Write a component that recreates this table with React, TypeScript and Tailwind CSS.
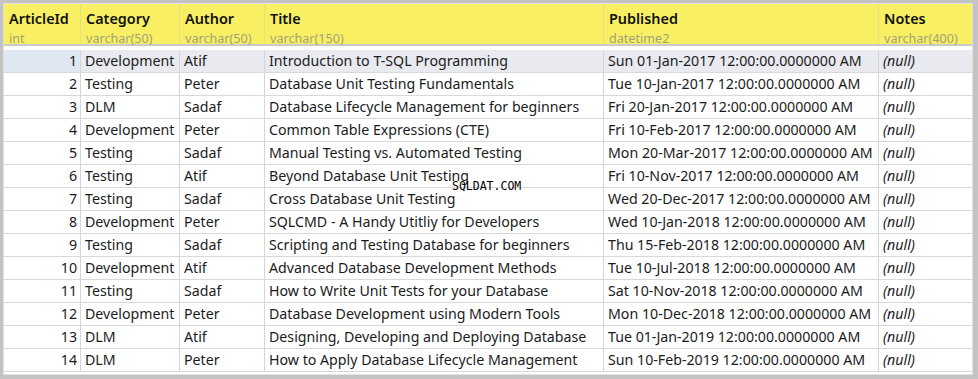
const columns = [
  { name: 'ArticleId', type: 'int', width: 'w-[77px]' },
  { name: 'Category', type: 'varchar(50)', width: 'w-[99px]' },
  { name: 'Author', type: 'varchar(50)', width: 'w-[85px]' },
  { name: 'Title', type: 'varchar(150)', width: 'w-[339px]' },
  { name: 'Published', type: 'datetime2', width: 'w-[275px]' },
  { name: 'Notes', type: 'varchar(400)', width: 'w-[93px]' },
];

const rows = [
  [1, 'Development', 'Atif', 'Introduction to T-SQL Programming', 'Sun 01-Jan-2017 12:00:00.0000000 AM'],
  [2, 'Testing', 'Peter', 'Database Unit Testing Fundamentals', 'Tue 10-Jan-2017 12:00:00.0000000 AM'],
  [3, 'DLM', 'Sadaf', 'Database Lifecycle Management for beginners', 'Fri 20-Jan-2017 12:00:00.0000000 AM'],
  [4, 'Development', 'Peter', 'Common Table Expressions (CTE)', 'Fri 10-Feb-2017 12:00:00.0000000 AM'],
  [5, 'Testing', 'Sadaf', 'Manual Testing vs. Automated Testing', 'Mon 20-Mar-2017 12:00:00.0000000 AM'],
  [6, 'Testing', 'Atif', 'Beyond Database Unit Testing', 'Fri 10-Nov-2017 12:00:00.0000000 AM'],
  [7, 'Testing', 'Sadaf', 'Cross Database Unit Testing', 'Wed 20-Dec-2017 12:00:00.0000000 AM'],
  [8, 'Development', 'Peter', 'SQLCMD - A Handy Utitliy for Developers', 'Wed 10-Jan-2018 12:00:00.0000000 AM'],
  [9, 'Testing', 'Sadaf', 'Scripting and Testing Database for beginners', 'Thu 15-Feb-2018 12:00:00.0000000 AM'],
  [10, 'Development', 'Atif', 'Advanced Database Development Methods', 'Tue 10-Jul-2018 12:00:00.0000000 AM'],
  [11, 'Testing', 'Sadaf', 'How to Write Unit Tests for your Database', 'Sat 10-Nov-2018 12:00:00.0000000 AM'],
  [12, 'Development', 'Peter', 'Database Development using Modern Tools', 'Mon 10-Dec-2018 12:00:00.0000000 AM'],
  [13, 'DLM', 'Atif', 'Designing, Developing and Deploying Database', 'Tue 01-Jan-2019 12:00:00.0000000 AM'],
  [14, 'DLM', 'Peter', 'How to Apply Database Lifecycle Management', 'Sun 10-Feb-2019 12:00:00.0000000 AM'],
];

export default function App() {
  return (
    <div className="w-[978px] h-[379px] bg-[#c3c3c3] pt-[3px] pl-[3px] pr-[5px] pb-[4px] font-['Noto_Sans',sans-serif] text-[14.2px] text-[#1b1b1b]">
      <div className="relative h-full bg-white border border-[#e2e2e2] flex flex-col">
        {/* Header */}
        <div className="flex h-[40px] bg-[#f8f062] border-b-2 border-[#c9c9c9] box-content">
          {columns.map((c) => (
            <div key={c.name} className={`${c.width} shrink-0 px-[5px] border-r border-[#e6df84] last:border-r-0 flex flex-col`}>
              <span className="font-semibold text-[14.4px] leading-[18px] mt-[6px] text-[#111]">{c.name}</span>
              <span className="text-[12.6px] leading-[16px] mt-[3px] text-[#a3a07c]">{c.type}</span>
            </div>
          ))}
        </div>

        {/* Rows */}
        <div className="mt-[4px] flex flex-col">
          {rows.map((r, i) => (
            <div key={r[0]} className={`flex h-[23px] border-b border-[#d9d9d9] ${i === 0 ? 'bg-[#e9eaf0]' : ''}`}>
              <div className={`w-[77px] shrink-0 border-r border-[#d3d6dc] pr-[3px] text-right leading-[22px] ${i === 0 ? 'bg-[#dfe7f3]' : ''}`}>{r[0]}</div>
              <div className="w-[99px] shrink-0 border-r border-[#d3d6dc] pl-[4px] leading-[22px] whitespace-nowrap">{r[1]}</div>
              <div className="w-[85px] shrink-0 border-r border-[#d3d6dc] pl-[4px] leading-[22px] whitespace-nowrap">{r[2]}</div>
              <div className="w-[339px] shrink-0 border-r border-[#d3d6dc] pl-[4px] leading-[22px] whitespace-nowrap overflow-hidden">{r[3]}</div>
              <div className="w-[275px] shrink-0 border-r border-[#d3d6dc] pl-[4px] leading-[22px] whitespace-nowrap overflow-hidden">{r[4]}</div>
              <div className="w-[93px] shrink-0 pl-[4px] leading-[22px] italic">(null)</div>
            </div>
          ))}
        </div>

        {/* Watermark */}
        <span className="absolute left-[448px] top-[176px] font-['DejaVu_Sans_Mono',monospace] text-[11.5px] leading-[13px] text-black">SQLDAT.COM</span>
      </div>
    </div>
  );
}
